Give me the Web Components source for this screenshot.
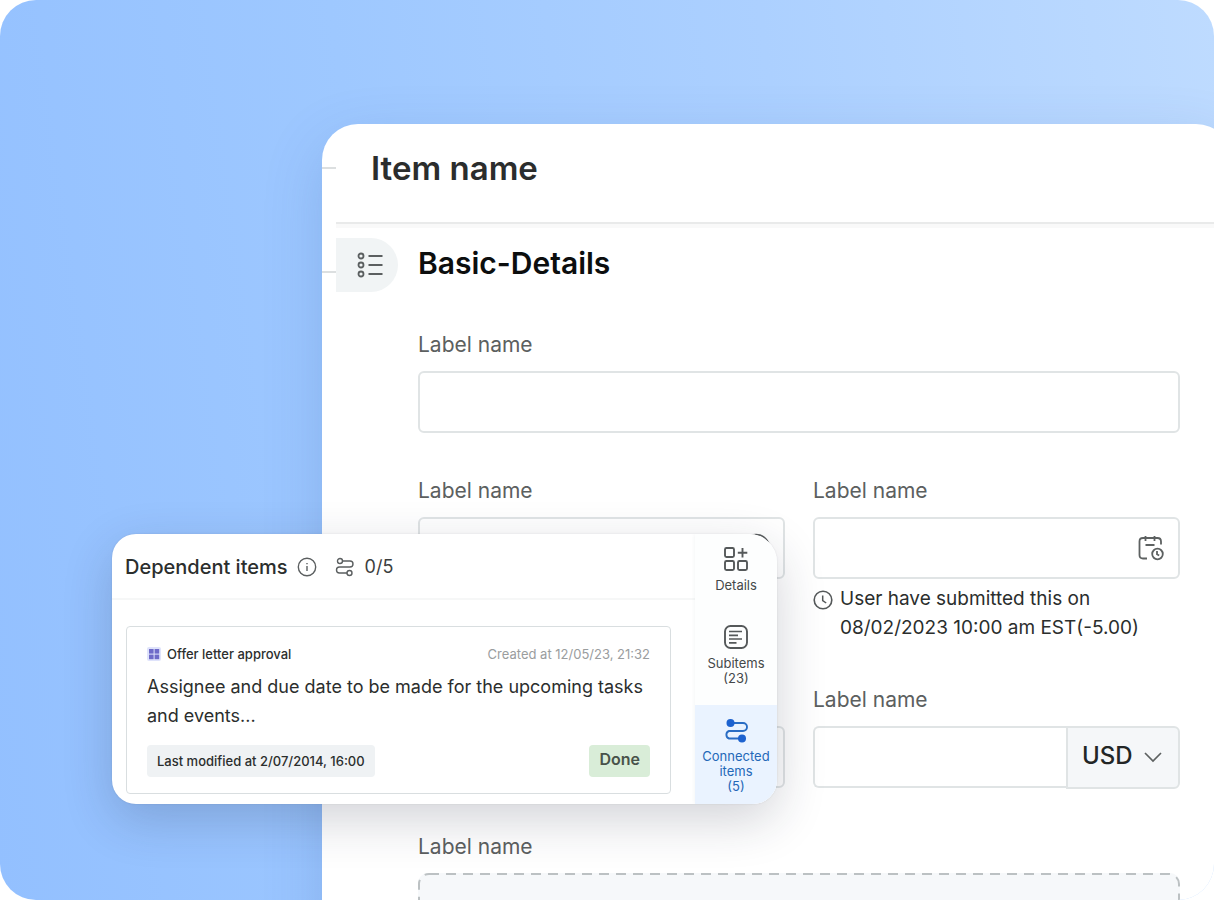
<!DOCTYPE html>
<html lang="en">
<head>
<meta charset="utf-8">
<meta name="viewport" content="width=device-width, initial-scale=1">
<title>Item name</title>
<style>
  body { margin: 0; background: #fff; font-family: Inter, "Liberation Sans", sans-serif; color: #2b2e2d; }
</style>
</head>
<body>
<app-stage>
  <item-panel>
    <span slot="title">Item name</span>
    <span slot="section">Basic-Details</span>
    <form-field>Label name</form-field>
    <field-row>
      <form-field icon="circle">Label name</form-field>
      <form-field icon="calendar">Label name
        <span slot="note">User have submitted this on 08/02/2023 10:00 am EST(-5.00)</span>
      </form-field>
    </field-row>
    <field-row>
      <form-field name="Label name"></form-field>
      <currency-field>Label name</currency-field>
    </field-row>
    <upload-field>Label name</upload-field>
  </item-panel>
  <dependent-card slot="overlay">
    <span slot="title">Dependent items</span>
    <span slot="count">0/5</span>
    <task-item>
      <span slot="source">Offer letter approval</span>
      <span slot="created">Created at 12/05/23, 21:32</span>
      Assignee and due date to be made for the upcoming tasks and events...
      <span slot="modified">Last modified at 2/07/2014, 16:00</span>
      <span slot="status">Done</span>
    </task-item>
    <side-tab slot="tabs" icon="details">Details</side-tab>
    <side-tab slot="tabs" icon="list">Subitems<span slot="count">(23)</span></side-tab>
    <side-tab slot="tabs" icon="linked" active>Connected items<span slot="count">(5)</span></side-tab>
  </dependent-card>
</app-stage>

<script>
const icons = {
  bullets: [28, 28, '<g stroke-width="1.800"><circle cx="4" cy="5" r="2.500"/><circle cx="4" cy="14" r="2.500"/><circle cx="4" cy="23" r="2.500"/><path d="M11.500 5h14M11.500 14h14M11.500 23h14"/></g>'],
  info: [20, 20, '<circle cx="10" cy="10" r="8.700" stroke-width="1.400"/><path d="M10 9v5M10 6v1.200" stroke-width="1.400"/>'],
  link: [20, 20, '<g stroke-width="1.400"><circle cx="5" cy="4" r="2.500"/><circle cx="14.500" cy="16" r="2.500"/><path d="M7.500 4H15a3 3 0 0 1 0 6H4.500a3 3 0 0 0 0 6H12"/></g>'],
  linked: [24, 24, '<path d="M6.500 4H19a4 4 0 0 1 0 8H5a4 4 0 0 0 0 7.500H17" stroke-width="1.900"/><circle cx="6.500" cy="4" r="4" fill="#1d62cf" stroke="none"/><circle cx="18" cy="19.500" r="4" fill="#1d62cf" stroke="none"/>'],
  details: [26, 26, '<g stroke-width="1.900"><rect x="2" y="2" width="9" height="9" rx="1.500"/><rect x="2" y="15" width="9" height="9" rx="1.500"/><rect x="15" y="15" width="9" height="9" rx="1.500"/><path d="M19.500 2v9.500M14.800 6.800h9.500"/></g>'],
  list: [26, 26, '<rect x="2" y="2" width="22" height="22" rx="5.500" stroke-width="1.900"/><path d="M6 7.500h13M6 11.300h9M6 15h13M6 18.800h7.500" stroke-width="1.700"/>'],
  calendar: [28, 28, '<g stroke-width="1.800"><path d="M10 24.500H6q-3.500 0-3.500-3.500V7.500Q2.500 4 6 4H20.500q3.500 0 3.500 3.500v3M8.500 2v5M17.500 2v5M8.500 11h9"/><circle cx="20.500" cy="20" r="5.300"/><path d="M20 17v3.300l2.200 1.200"/></g>'],
  clock: [20, 20, '<circle cx="10" cy="10" r="8.800" stroke-width="1.600"/><path d="M9.700 5.500v5l3.500 2.500" stroke-width="1.500"/>'],
  circle: [28, 28, '<circle cx="14" cy="14" r="13.500" stroke-width="1.600"/>'],
  chevron: [20, 20, '<path d="M2 6l8 8 8-8" stroke-width="1.700"/>'],
  app: [14, 14, '<rect width="14" height="14" rx="2" fill="#dfe3fb" stroke="none"/><g fill="#6f6bc8" stroke="none"><rect x="2" y="2" width="4.600" height="4.600"/><rect x="7.600" y="2" width="4.600" height="4.600"/><rect x="2" y="7.600" width="4.600" height="4.600"/><rect x="7.600" y="7.600" width="4.600" height="4.600"/></g>']
};
const icon = name => {
  const [w, h, body] = icons[name];
  return `<svg class="icon" width="${w}" height="${h}" viewBox="0 0 ${w} ${h}" fill="none" stroke="currentColor" aria-hidden="true">${body}</svg>`;
};
const define = (tag, render) => customElements.define(tag, class extends HTMLElement {
  constructor() {
    super();
    this.attachShadow({ mode: 'open' });
  }
  connectedCallback() {
    this.shadowRoot.innerHTML = '<style>*{box-sizing:border-box}.icon{display:block;flex:none;overflow:visible}</style>' + render(this);
  }
});
const fieldCss = `
  :host { display: block; min-width: 0; }
  label { display: block; min-height: 26px; font-size: 21px; line-height: 26px; margin-bottom: 13px; color: #5c6060; }
  input, select { font: inherit; color: inherit; width: 100%; height: 62px; margin: 0; padding: 0 16px;
    border: 2px solid #e0e4e5; border-radius: 6px; background: #fff; display: block; }
  .box { position: relative; }`;

define('app-stage', () => `
  <style>
    :host { display: block; position: relative; height: 100vh; overflow: hidden; border-radius: 36px; isolation: isolate;
      background: linear-gradient(82deg, #93c0ff 0%, #9ec8ff 34%, #acd0ff 66%, #bedbff 100%); }
    main { padding: 124px 0 0 322px; }
  </style>
  <main><slot></slot></main><slot name="overlay"></slot>`);

define('item-panel', () => `
  <style>
    :host { display: block; margin-right: -18px; padding-right: 18px; background: #fff; border-radius: 36px 36px 0 0;
      box-shadow: 0 20px 60px rgba(50, 90, 160, .2); }
    header { display: flex; align-items: center; padding-top: 24px; }
    i { width: 14px; height: 2px; background: #dcdfe0; flex: none; }
    h1 { margin: 0 0 0 35px; font-size: 33px; line-height: 40px; font-weight: 600; color: #2b2d2d; }
    hr { margin: 34px 0 0 14px; height: 6px; border: 0; border-top: 2px solid #e9eaea; background: #f9f9f9; }
    .section { display: flex; align-items: center; margin-top: 10px; }
    .section i { align-self: flex-end; margin-bottom: 19px; }
    .tab { display: flex; align-items: center; width: 62px; height: 54px; padding-left: 21px; flex: none;
      background: #f1f4f5; border-radius: 0 27px 27px 0; color: #5b5f60; }
    h2 { margin: 0 0 4px 20px; font-size: 30px; line-height: 36px; font-weight: 600; color: #0c0e0e; }
    .fields { display: grid; gap: 45px; padding: 40px 34px 40px 96px; }
  </style>
  <header><i></i><h1><slot name="title"></slot></h1></header>
  <hr>
  <div class="section"><i></i><div class="tab">${icon('bullets')}</div><h2><slot name="section"></slot></h2></div>
  <div class="fields"><slot></slot></div>`);

define('field-row', () => `
  <style>:host { display: grid; grid-template-columns: 1fr 1fr; gap: 28px; }</style><slot></slot>`);

define('form-field', host => {
  const name = host.getAttribute('icon');
  const hidden = host.getAttribute('name');
  const note = host.querySelector('[slot=note]');
  return `
  <style>${fieldCss}
    .box .icon { position: absolute; right: 15px; top: 17px; color: #5d6161; }
    .note { display: flex; gap: 7px; margin-top: 5px; padding-right: 16px; font-size: 19px; line-height: 29px; color: #2b2e2d; }
    .note .icon { margin-top: 6px; color: #55595a; }
  </style>
  <label for="f"><slot></slot></label>
  <div class="box"><input id="f" type="text"${hidden ? ` aria-label="${hidden}"` : ''}>${name ? icon(name) : ''}</div>
  ${note ? `<div class="note">${icon('clock')}<slot name="note"></slot></div>` : ''}`;
});

define('currency-field', () => `
  <style>${fieldCss}
    .box { display: flex; align-items: flex-start; }
    input { flex: 1; width: 0; border-radius: 6px 0 0 6px; border-right: 0; }
    .unit { position: relative; width: 114px; flex: none; }
    select { appearance: none; height: 63px; padding: 0 0 4px 14px; font-size: 24px; font-weight: 500; color: #232626;
      background: #f5f7f9; border-radius: 0 6px 6px 0; }
    .unit .icon { position: absolute; right: 17px; top: 21px; pointer-events: none; color: #5d6161; }
  </style>
  <label for="f"><slot></slot></label>
  <div class="box"><input id="f" type="text">
    <div class="unit"><select aria-label="Currency"><option>USD</option></select>${icon('chevron')}</div></div>`);

define('upload-field', () => `
  <style>${fieldCss}
    .drop { position: relative; height: 120px; border-radius: 10px; background: #f6f8fa; }
    .drop svg { display: block; width: 100%; height: 100%; }
    rect { x: 1px; y: 1px; width: calc(100% - 2px); height: calc(100% - 2px); rx: 10px; fill: none;
      stroke: #bcc1c3; stroke-width: 2px; stroke-dasharray: 10 7; }
    .drop input { position: absolute; inset: 0; height: 100%; opacity: 0; }
  </style>
  <label for="f"><slot></slot></label>
  <div class="drop"><svg aria-hidden="true"><rect/></svg><input id="f" type="file"></div>`);

define('dependent-card', () => `
  <style>
    :host { position: absolute; left: 112px; top: 534px; width: 665px; display: flex; overflow: hidden;
      border-radius: 24px 28px 24px 24px; background: #fff;
      box-shadow: 0 16px 50px rgba(30, 35, 60, .2), 0 0 2px rgba(30, 35, 60, .12); }
    section { flex: 1; min-width: 0; }
    header { display: flex; align-items: center; height: 66px; padding: 2px 0 0 13px; border-bottom: 2px solid #f6f7f7; }
    h2 { margin: 0 9px 0 0; font-size: 20px; line-height: 28px; font-weight: 500; color: #2b2e2d; }
    .icon { color: #5b5f60; }
    .count { display: flex; align-items: center; gap: 10px; margin-left: 18px; font-size: 18px; line-height: 28px; color: #3b3e3e; }
    .body { padding: 26px 24px 10px 14px; }
    nav { display: flex; flex-direction: column; width: 82px; flex: none; background: #fdfefe; box-shadow: 0 0 4px rgba(60, 70, 90, .07); }
  </style>
  <section>
    <header><h2><slot name="title"></slot></h2>${icon('info')}<span class="count">${icon('link')}<slot name="count"></slot></span></header>
    <div class="body"><slot></slot></div>
  </section>
  <nav><slot name="tabs"></slot></nav>`);

define('task-item', () => `
  <style>
    :host { display: block; padding: 18px 20px 16px; border: 1px solid #d9dee0; border-radius: 4px; }
    .row { display: flex; justify-content: space-between; align-items: center; }
    .source { display: flex; align-items: center; gap: 6px; font-size: 13px; line-height: 18px; font-weight: 500; }
    .created { font-size: 13px; line-height: 18px; color: #9a9d9e; }
    p { margin: 9px 0 15px; font-size: 18px; line-height: 29px; color: #2b2e2d; }
    .chip { padding: 0 10px; border-radius: 4px; background: #eff2f4; font-size: 13px; line-height: 32px; font-weight: 500; }
    button { font: inherit; font-size: 16px; line-height: 28px; font-weight: 600; margin: 0; padding: 0 10px 4px; border: 0; border-radius: 4px;
      background: #d9edd8; color: #48524a; }
  </style>
  <div class="row"><span class="source">${icon('app')}<slot name="source"></slot></span><span class="created"><slot name="created"></slot></span></div>
  <p><slot></slot></p>
  <div class="row"><span class="chip"><slot name="modified"></slot></span><button type="button"><slot name="status"></slot></button></div>`);

define('side-tab', host => `
  <style>
    :host { display: block; }
    :host([active]) { flex: 1; }
    button { font: inherit; font-size: 13px; line-height: 15px; width: 100%; height: 100%; margin: 0; padding: 12px 4px 19px; border: 0; background: none;
      display: flex; flex-direction: column; align-items: center; color: #444849; }
    .icon { margin-bottom: 6px; color: #55595a; }
    :host([active]) button { padding: 14px 4px 7px; background: #eaf3ff; color: #2468b8; }
    :host([active]) .icon { color: #2a6dc4; }
  </style>
  <button type="button">${icon(host.getAttribute('icon'))}<span><slot></slot></span><slot name="count"></slot></button>`);
</script>
</body>
</html>
